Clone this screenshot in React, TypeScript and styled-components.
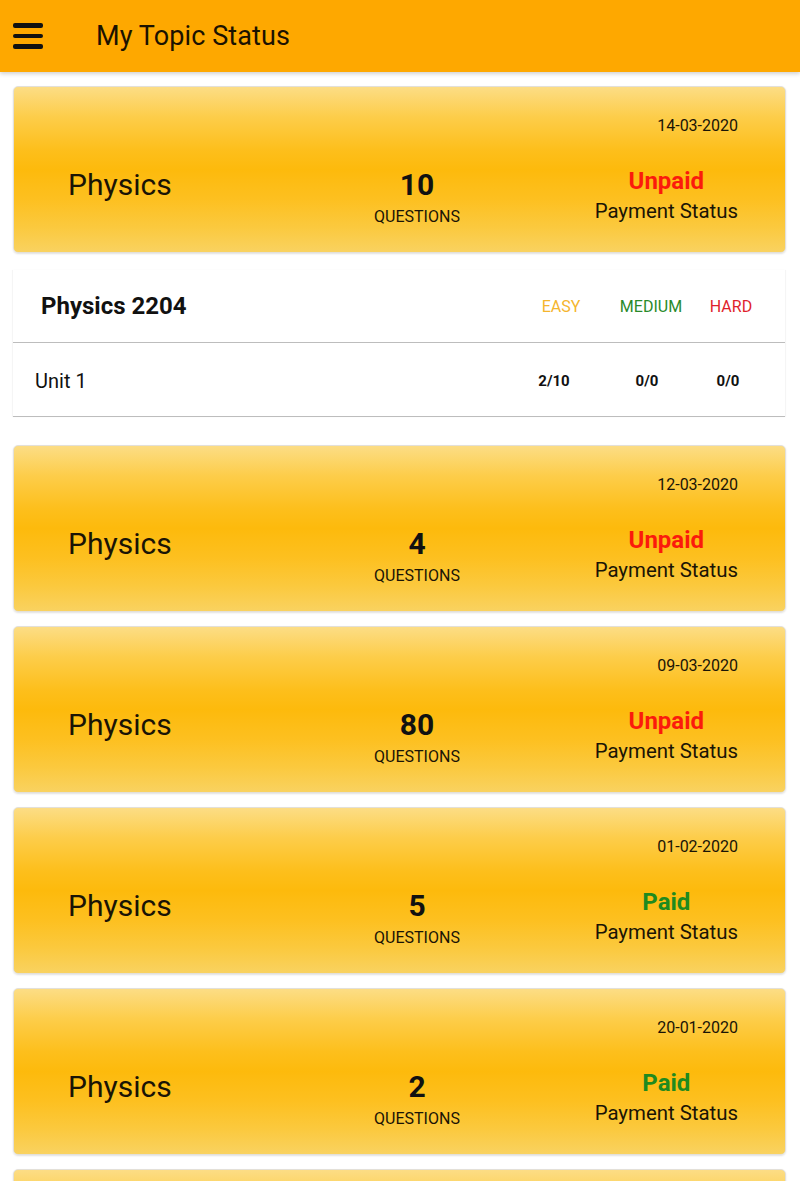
import React from "react";
import styled, { createGlobalStyle } from "styled-components";

const GlobalStyle = createGlobalStyle`
  html, body { margin: 0; padding: 0; background: #ffffff; }
  body { font-family: Roboto, "Noto Sans", Arial, sans-serif; color: #111; }
  * { box-sizing: border-box; }
`;

const Page = styled.div`
  width: 800px;
  height: 1181px;
  overflow: hidden;
  background: #fff;
`;

const TopBar = styled.header`
  height: 72px;
  background: #fea800;
  display: flex;
  align-items: center;
  padding-left: 13px;
  box-shadow: 0 2px 4px rgba(0, 0, 0, 0.18);
  position: relative;
  z-index: 2;
`;

const Burger = styled.div`
  width: 30px;
  display: flex;
  flex-direction: column;
  gap: 6px;
  margin-right: 53px;
  & > span {
    display: block;
    height: 4.5px;
    border-radius: 2px;
    background: #111;
  }
`;

const Title = styled.h1`
  margin: 0;
  font-size: 27px;
  font-weight: 400;
  color: #1b1200;
  letter-spacing: 0.1px;
`;

const List = styled.main`
  display: flex;
  flex-direction: column;
  gap: 14px;
  padding: 14px 14px 0 13px;
`;

const Card = styled.section`
  flex-shrink: 0;
  height: 167px;
  border: 1px solid #e3e0d8;
  border-radius: 5px;
  background: linear-gradient(
    to bottom,
    #fcdd85 0%,
    #fdcd4a 18%,
    #fdbf1c 38%,
    #fdba0c 50%,
    #fdc020 68%,
    #fbc93e 85%,
    #f9d260 100%
  );
  box-shadow: 0 1px 2px rgba(0, 0, 0, 0.12);
  padding: 29px 47px 0 54px;
  display: flex;
  flex-direction: column;
`;

const DateRow = styled.div`
  text-align: right;
  font-size: 16px;
  line-height: 20px;
  color: #1a1405;
`;

const CardBody = styled.div`
  margin-top: 31px;
  display: grid;
  grid-template-columns: 289px 120px 1fr;
  align-items: start;
`;

const Subject = styled.div`
  font-size: 30px;
  line-height: 36px;
  color: #1a1405;
`;

const CountBlock = styled.div`
  display: flex;
  flex-direction: column;
  align-items: center;
  padding-top: 1px;
`;

const Count = styled.div`
  font-size: 30px;
  line-height: 34px;
  font-weight: 700;
  color: #111;
`;

const CountLabel = styled.div`
  margin-top: 5px;
  font-size: 16px;
  line-height: 20px;
  color: #1a1405;
`;

const PayBlock = styled.div`
  justify-self: end;
  display: flex;
  flex-direction: column;
  align-items: center;
`;

const PayState = styled.div<{ $paid: boolean }>`
  font-size: 24px;
  line-height: 28px;
  font-weight: 700;
  color: ${(p) => (p.$paid ? "#1f8a1f" : "#fb1a0c")};
`;

const PayLabel = styled.div`
  margin-top: 3px;
  font-size: 20.4px;
  line-height: 26px;
  color: #1a1405;
`;

const Detail = styled.section`
  flex-shrink: 0;
  margin: 3px 1px 14px 0;
  background: #fff;
  box-shadow: -1px 0 1px rgba(0, 0, 0, 0.04), 1px 0 1px rgba(0, 0, 0, 0.04);
`;

const DetailGrid = styled.div<{ $head?: boolean }>`
  display: grid;
  grid-template-columns: 1fr 96px 90px 72px;
  align-items: center;
  height: ${(p) => (p.$head ? "73px" : "74px")};
  padding: ${(p) => (p.$head ? "0 18px 0 28px" : "2px 21px 0 22px")};
  border-bottom: 1px solid #bdbdbd;
`;

const DetailTitle = styled.div`
  font-size: 24px;
  font-weight: 700;
  color: #111;
`;

const Level = styled.div<{ $color: string; $shift?: number }>`
  text-align: center;
  font-size: 16px;
  color: ${(p) => p.$color};
  padding-left: ${(p) => p.$shift ?? 0}px;
`;

const UnitName = styled.div`
  font-size: 20px;
  color: #111;
`;

const Score = styled.div`
  text-align: center;
  font-size: 15px;
  font-weight: 700;
  color: #111;
`;

const StubCard = styled(Card)`
  padding: 0;
`;

type Entry = { date: string; count: number; paid: boolean };

const entries: Entry[] = [
  { date: "14-03-2020", count: 10, paid: false },
  { date: "12-03-2020", count: 4, paid: false },
  { date: "09-03-2020", count: 80, paid: false },
  { date: "01-02-2020", count: 5, paid: true },
  { date: "20-01-2020", count: 2, paid: true },
];

const TopicCard: React.FC<{ e: Entry }> = ({ e }) => (
  <Card>
    <DateRow>{e.date}</DateRow>
    <CardBody>
      <Subject>Physics</Subject>
      <CountBlock>
        <Count>{e.count}</Count>
        <CountLabel>QUESTIONS</CountLabel>
      </CountBlock>
      <PayBlock>
        <PayState $paid={e.paid}>{e.paid ? "Paid" : "Unpaid"}</PayState>
        <PayLabel>Payment Status</PayLabel>
      </PayBlock>
    </CardBody>
  </Card>
);

export default function App() {
  return (
    <Page>
      <GlobalStyle />
      <TopBar>
        <Burger>
          <span />
          <span />
          <span />
        </Burger>
        <Title>My Topic Status</Title>
      </TopBar>
      <List>
        <TopicCard e={entries[0]} />
        <Detail>
          <DetailGrid $head>
            <DetailTitle>Physics 2204</DetailTitle>
            <Level $color="#f5b52e" $shift={8}>EASY</Level>
            <Level $color="#2a8a2a" $shift={2}>MEDIUM</Level>
            <Level $color="#e01f2c">HARD</Level>
          </DetailGrid>
          <DetailGrid>
            <UnitName>Unit 1</UnitName>
            <Score>2/10</Score>
            <Score>0/0</Score>
            <Score>0/0</Score>
          </DetailGrid>
        </Detail>
        {entries.slice(1).map((e) => (
          <TopicCard key={e.date} e={e} />
        ))}
        <StubCard />
      </List>
    </Page>
  );
}
